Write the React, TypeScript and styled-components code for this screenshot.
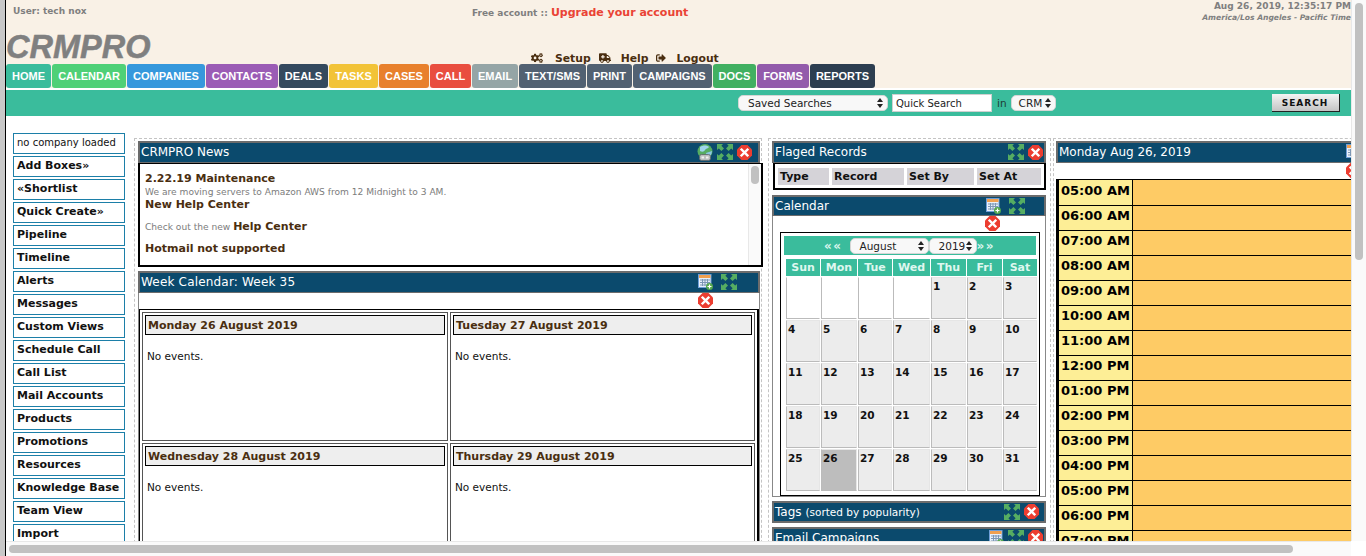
import React from "react";
import styled, { createGlobalStyle } from "styled-components";
import { FaCogs, FaAmbulance, FaSignOutAlt } from "react-icons/fa";

const GlobalStyle = createGlobalStyle`
  html, body { margin: 0; padding: 0; height: 100%; overflow: hidden; background: #fff; }
  * { box-sizing: border-box; }
  body { font-family: "DejaVu Sans", Verdana, sans-serif; }
`;

const tabs = [
  { text: "HOME", color: "#3abc9c", w: 45 },
  { text: "CALENDAR", color: "#4fd077", w: 74 },
  { text: "COMPANIES", color: "#3698dc", w: 78 },
  { text: "CONTACTS", color: "#9b5cb5", w: 72 },
  { text: "DEALS", color: "#34495e", w: 49 },
  { text: "TASKS", color: "#f2c337", w: 49 },
  { text: "CASES", color: "#e8802c", w: 50 },
  { text: "CALL", color: "#e94e3f", w: 41 },
  { text: "EMAIL", color: "#95a5a6", w: 46 },
  { text: "TEXT/SMS", color: "#526172", w: 67 },
  { text: "PRINT", color: "#526172", w: 45 },
  { text: "CAMPAIGNS", color: "#526172", w: 79 },
  { text: "DOCS", color: "#41b061", w: 43 },
  { text: "FORMS", color: "#935bab", w: 52 },
  { text: "REPORTS", color: "#2d3e50", w: 65 },
];

const sideItems = [
  "Add Boxes»", "«Shortlist", "Quick Create»", "Pipeline", "Timeline", "Alerts", "Messages",
  "Custom Views", "Schedule Call", "Call List", "Mail Accounts", "Products", "Promotions",
  "Resources", "Knowledge Base", "Team View", "Import",
];

const hours = [
  "05:00 AM", "06:00 AM", "07:00 AM", "08:00 AM", "09:00 AM", "10:00 AM", "11:00 AM", "12:00 PM",
  "01:00 PM", "02:00 PM", "03:00 PM", "04:00 PM", "05:00 PM", "06:00 PM", "07:00 PM",
];

const weekDays = ["Sun", "Mon", "Tue", "Wed", "Thu", "Fri", "Sat"];
const monthCells = [0, 0, 0, 0, ...Array.from({ length: 31 }, (_, i) => i + 1)];

const ExpandIcon = () => (
  <svg width="16" height="16" viewBox="0 0 16 16">
    <g fill="#56ad62">
      <polygon points="0,0 6,0 4.4,1.8 7,4.4 4.4,7 1.8,4.4 0,6" />
      <polygon points="16,0 10,0 11.6,1.8 9,4.4 11.6,7 14.2,4.4 16,6" />
      <polygon points="0,16 6,16 4.4,14.2 7,11.6 4.4,9 1.8,11.6 0,10" />
      <polygon points="16,16 10,16 11.6,14.2 9,11.6 11.6,9 14.2,11.6 16,10" />
    </g>
  </svg>
);

const CloseIcon = () => (
  <svg width="15" height="15" viewBox="0 0 15 15">
    <polygon points="4.5,0 10.5,0 15,4.5 15,10.5 10.5,15 4.5,15 0,10.5 0,4.5" fill="#ec3d30" />
    <path d="M4.6 4.6 L10.4 10.4 M10.4 4.6 L4.6 10.4" stroke="#fff" strokeWidth="2.4" strokeLinecap="square" />
  </svg>
);

const CalendarAddIcon = () => (
  <svg width="15" height="16" viewBox="0 0 15 16">
    <rect x="0.5" y="0.5" width="12.5" height="13" fill="#e8f0fa" stroke="#6f9fd8" />
    <rect x="1" y="1" width="11.5" height="3" fill="#f0a050" />
    <path d="M2 6h10M2 8.5h10M2 11h10M4.5 5v7M7 5v7M9.5 5v7" stroke="#7d97b5" strokeWidth="1" />
    <circle cx="11.5" cy="12.5" r="3.5" fill="#54a84e" />
    <path d="M9.5 12.5h4M11.5 10.5v4" stroke="#fff" strokeWidth="1.2" />
  </svg>
);

const GlobeIcon = () => (
  <svg width="16" height="17" viewBox="0 0 16 17">
    <circle cx="8" cy="7.5" r="7.5" fill="#56ad62" />
    <path d="M3 3c3-2 7-2 9 0-1 2-3 1-4 3s-3 2-5 1z" fill="#9fd4ec" />
    <path d="M9 9c2-1 4-1 6-2 0 3-2 6-5 7z" fill="#8cc6e4" />
    <rect x="2.5" y="10.5" width="11" height="6" rx="2" fill="#b9bdbd" stroke="#5d6668" strokeWidth="0.8" />
    <rect x="4.5" y="12.5" width="2.6" height="2" fill="#f2f2f2" />
    <rect x="8.9" y="12.5" width="2.6" height="2" fill="#f2f2f2" />
  </svg>
);

const SelectArrows = () => (
  <svg width="6" height="10" viewBox="0 0 6 10">
    <path d="M3 0 L6 4 H0 Z M3 10 L0 6 H6 Z" fill="#222" />
  </svg>
);

export default function App() {
  return (
    <Screen>
      <GlobalStyle />
      <LeftEdge />
      <Stage>
        <Upper>
          <Page>
            <Header>
              <TopRow>
                <UserLabel>User: tech nox</UserLabel>
                <Account>
                  Free account :: <Upgrade>Upgrade your account</Upgrade>
                </Account>
                <Clock>
                  <div>Aug 26, 2019, 12:35:17 PM</div>
                  <Zone>America/Los Angeles - Pacific Time</Zone>
                </Clock>
              </TopRow>
              <LogoRow>
                <Logo>CRMPRO</Logo>
                <TopLinks>
                  <FaCogs size={12} />
                  <TopLink $gap={12}>Setup</TopLink>
                  <FaAmbulance size={12} />
                  <TopLink $gap={10}>Help</TopLink>
                  <FaSignOutAlt size={10} />
                  <TopLink $gap={10}>Logout</TopLink>
                </TopLinks>
              </LogoRow>
              <Nav>
                {tabs.map((tab) => (
                  <Tab key={tab.text} $color={tab.color} $w={tab.w}>
                    {tab.text}
                  </Tab>
                ))}
              </Nav>
            </Header>
            <SearchBar>
              <SelectBox $w={150}>
                Saved Searches
                <SelectArrows />
              </SelectBox>
              <SearchInput>Quick Search</SearchInput>
              <InLabel>in</InLabel>
              <SelectBox $w={45} $pad={7}>
                CRM
                <SelectArrows />
              </SelectBox>
              <SearchButton>SEARCH</SearchButton>
            </SearchBar>
            <Main>
              <Sidebar>
                <CompanyBox>no company loaded</CompanyBox>
                {sideItems.map((item) => (
                  <SideItem key={item}>{item}</SideItem>
                ))}
              </Sidebar>

              <Column $w={628}>
                <PanelHeader $w={622}>
                  <PanelTitle>CRMPRO News</PanelTitle>
                  <PanelIcons $right={6}>
                    <GlobeIcon />
                    <ExpandIcon />
                    <CloseIcon />
                  </PanelIcons>
                </PanelHeader>
                <NewsBody>
                  <NewsText>
                    <NewsTitle>2.22.19 Maintenance</NewsTitle>
                    <NewsNote>We are moving servers to Amazon AWS from 12 Midnight to 3 AM.</NewsNote>
                    <NewsTitle>New Help Center</NewsTitle>
                    <NewsLine>
                      Check out the new <NewsTitle as="span">Help Center</NewsTitle>
                    </NewsLine>
                    <NewsTitle>Hotmail not supported</NewsTitle>
                    <NewsClip>Hotmail and Live users will not be receiving emails from the CRM.</NewsClip>
                  </NewsText>
                  <InnerTrack>
                    <InnerThumb />
                  </InnerTrack>
                </NewsBody>

                <WeekHeader>
                  <WeekTitle>Week Calendar: Week 35</WeekTitle>
                  <PanelIcons $right={21} $gap={8}>
                    <CalendarAddIcon />
                    <ExpandIcon />
                  </PanelIcons>
                </WeekHeader>
                <WeekBody>
                  <CloseRow $left={559}>
                    <CloseIcon />
                  </CloseRow>
                  <WeekGrid>
                    {["Monday 26 August 2019", "Tuesday 27 August 2019", "Wednesday 28 August 2019", "Thursday 29 August 2019"].map(
                      (day) => (
                        <DayCell key={day}>
                          <DayTitle>{day}</DayTitle>
                          <NoEvents>No events.</NoEvents>
                        </DayCell>
                      ),
                    )}
                  </WeekGrid>
                </WeekBody>
              </Column>

              <Column $w={283}>
                <SideHeader>
                  <PanelTitle>Flaged Records</PanelTitle>
                  <PanelIcons $right={1}>
                    <ExpandIcon />
                    <CloseIcon />
                  </PanelIcons>
                </SideHeader>
                <FlagBody>
                  <FlagCell $w={51}>Type</FlagCell>
                  <FlagCell $w={72}>Record</FlagCell>
                  <FlagCell $w={67}>Set By</FlagCell>
                  <FlagCell $w={64}>Set At</FlagCell>
                </FlagBody>

                <CalendarHeader>
                  <PanelTitle>Calendar</PanelTitle>
                  <PanelIcons $right={19} $gap={8}>
                    <CalendarAddIcon />
                    <ExpandIcon />
                  </PanelIcons>
                </CalendarHeader>
                <CalendarBody>
                  <CloseRow $left={212}>
                    <CloseIcon />
                  </CloseRow>
                  <CalendarFrame>
                    <MonthBar>
                      <Chevrons $after={7}>««</Chevrons>
                      <SelectBox $w={79}>
                        August
                        <SelectArrows />
                      </SelectBox>
                      <SelectBox $w={48}>
                        2019
                        <SelectArrows />
                      </SelectBox>
                      <Chevrons $after={0}>»»</Chevrons>
                    </MonthBar>
                    <MonthGrid>
                      {weekDays.map((d) => (
                        <WeekDay key={d}>{d}</WeekDay>
                      ))}
                      {monthCells.map((n, i) => (
                        <DateCell key={i} $empty={n === 0} $today={n === 26}>
                          {n > 0 ? n : ""}
                        </DateCell>
                      ))}
                    </MonthGrid>
                  </CalendarFrame>
                </CalendarBody>

                <TagsHeader>
                  <PanelTitle>
                    Tags <TitleNote>(sorted by popularity)</TitleNote>
                  </PanelTitle>
                  <PanelIcons $right={5}>
                    <ExpandIcon />
                    <CloseIcon />
                  </PanelIcons>
                </TagsHeader>
                <TagsHeader>
                  <PanelTitle>Email Campaigns</PanelTitle>
                  <PanelIcons $right={1}>
                    <CalendarAddIcon />
                    <ExpandIcon />
                    <CloseIcon />
                  </PanelIcons>
                </TagsHeader>
              </Column>

              <DayColumn>
                <DayHeader>
                  <PanelTitle>Monday Aug 26, 2019</PanelTitle>
                  <PanelIcons $right={21}>
                    <CalendarAddIcon />
                  </PanelIcons>
                </DayHeader>
                <CloseRow $left={290}>
                  <CloseIcon />
                </CloseRow>
                <HourTable>
                  {hours.map((h) => (
                    <HourRow key={h}>
                      <HourLabel>{h}</HourLabel>
                      <HourSlot />
                    </HourRow>
                  ))}
                </HourTable>
              </DayColumn>
            </Main>
          </Page>
          <VTrack>
            <VThumb />
          </VTrack>
        </Upper>
        <BottomRow>
          <HTrack>
            <HThumb />
          </HTrack>
          <Corner />
        </BottomRow>
      </Stage>
    </Screen>
  );
}

const Screen = styled.div`
  display: flex;
  width: 1366px;
  height: 556px;
  overflow: hidden;
  background: #fff;
`;
const LeftEdge = styled.div`
  flex: none;
  width: 6px;
  background: #c8c8c8;
  border-right: 1px solid #000;
`;
const Stage = styled.div`
  flex: 1;
  min-width: 0;
  display: flex;
  flex-direction: column;
`;
const Upper = styled.div`
  flex: 1;
  min-height: 0;
  display: flex;
`;
const Page = styled.div`
  flex: 1;
  min-width: 0;
  overflow: hidden;
`;
const VTrack = styled.div`
  flex: none;
  width: 15px;
  background: #fafafa;
  border-left: 1px solid #e8e8e8;
  padding: 3px 3px 0 3px;
`;
const VThumb = styled.div`
  width: 8px;
  height: 257px;
  border-radius: 4px;
  background: #c1c1c1;
`;
const BottomRow = styled.div`
  flex: none;
  height: 15px;
  display: flex;
`;
const HTrack = styled.div`
  flex: 1;
  background: #fafafa;
  border-top: 1px solid #e8e8e8;
  padding: 3px 0 0 3px;
`;
const HThumb = styled.div`
  width: 1284px;
  height: 8px;
  border-radius: 4px;
  background: #c1c1c1;
`;
const Corner = styled.div`
  flex: none;
  width: 15px;
  background: #fff;
`;

const Header = styled.div`
  height: 88px;
  background: #f9f1e6;
`;
const TopRow = styled.div`
  display: grid;
  grid-template-columns: 466px 1fr auto;
  height: 31px;
`;
const UserLabel = styled.div`
  padding: 6px 0 0 7px;
  font-size: 9px;
  font-weight: 700;
  color: #7f7f7f;
`;
const Account = styled.div`
  padding-top: 6px;
  font-size: 9px;
  font-weight: 700;
  color: #7f7f7f;
`;
const Upgrade = styled.span`
  font-size: 11px;
  color: #ea4335;
`;
const Clock = styled.div`
  padding-top: 1px;
  text-align: right;
  font-size: 9px;
  line-height: 11px;
  font-weight: 700;
  color: #7f7f7f;
`;
const Zone = styled.div`
  font-size: 7.6px;
  font-style: italic;
`;
const LogoRow = styled.div`
  display: flex;
  height: 33px;
`;
const Logo = styled.div`
  width: 525px;
  font-family: "Liberation Sans", Arial, sans-serif;
  font-size: 32.5px;
  line-height: 33px;
  font-weight: 700;
  font-style: italic;
  color: #808080;
  -webkit-text-stroke: 0.5px #808080;
`;
const TopLinks = styled.div`
  display: flex;
  align-items: center;
  height: 14px;
  margin-top: 20px;
  color: #4a2e10;
`;
const TopLink = styled.span<{ $gap: number }>`
  margin: 0 8px 0 ${({ $gap }) => $gap}px;
  font-size: 10.8px;
  font-weight: 700;
`;
const Nav = styled.div`
  display: flex;
  gap: 1px;
  height: 24px;
`;
const Tab = styled.div<{ $color: string; $w: number }>`
  width: ${({ $w }) => $w}px;
  display: flex;
  align-items: center;
  justify-content: center;
  border-radius: 3px;
  background: ${({ $color }) => $color};
  font-family: "Liberation Sans", Arial, sans-serif;
  font-size: 11px;
  font-weight: 700;
  color: #fff;
`;

const SearchBar = styled.div`
  display: flex;
  align-items: center;
  height: 26px;
  margin-top: 2px;
  padding-left: 732px;
  background: #3abc9c;
`;
const SelectBox = styled.div<{ $w: number; $pad?: number }>`
  flex: none;
  width: ${({ $w }) => $w}px;
  height: 16px;
  display: flex;
  align-items: center;
  justify-content: space-between;
  padding: 0 4px 0 ${({ $pad }) => $pad ?? 9}px;
  border: 1px solid #d6d6d6;
  border-radius: 5px;
  background: #f8f8f8;
  font-size: 10.5px;
  color: #222;
`;
const SearchInput = styled.div`
  width: 100px;
  height: 18px;
  margin-left: 4px;
  padding: 3px 0 0 3px;
  background: #fff;
  border: 1px solid #d0d0d0;
  font-size: 10px;
  color: #222;
`;
const InLabel = styled.span`
  margin: 0 4px 0 5px;
  font-size: 10.5px;
  color: #1d3d36;
`;
const SearchButton = styled.div`
  width: 68px;
  height: 18px;
  margin-left: 216px;
  display: flex;
  align-items: center;
  justify-content: center;
  background: linear-gradient(#f4f4f4, #c4c4c4);
  border-right: 1px solid #222;
  border-bottom: 1px solid #222;
  font-size: 9px;
  font-weight: 700;
  letter-spacing: 1px;
  color: #111;
`;

const Main = styled.div`
  display: flex;
  align-items: flex-start;
  padding: 17px 0 0 7px;
`;
const Sidebar = styled.div`
  flex: none;
  width: 112px;
  display: flex;
  flex-direction: column;
  gap: 2px;
`;
const CompanyBox = styled.div`
  height: 21px;
  padding-left: 3px;
  border: 1px solid #1c7fa8;
  font-size: 10px;
  line-height: 17px;
  color: #111;
`;
const SideItem = styled.div`
  height: 21px;
  padding-left: 3px;
  border: 1px solid #1c7fa8;
  font-size: 11px;
  line-height: 18px;
  font-weight: 700;
  color: #111;
`;

const Column = styled.div<{ $w: number }>`
  flex: none;
  width: ${({ $w }) => $w}px;
  height: 420px;
  margin: 5px 0 0 9px;
  padding: 2px 0 0 3px;
  border: 1px dashed #c4c4c4;
  border-bottom: 0;

  & + & {
    margin-left: 6px;
  }
`;
const DayColumn = styled.div`
  flex: none;
  width: 330px;
  height: 420px;
  margin: 5px 0 0 2px;
  padding: 2px 0 0 2px;
  border: 1px dashed #c4c4c4;
  border-bottom: 0;
`;
const PanelHeader = styled.div<{ $w?: number }>`
  width: ${({ $w }) => ($w ? `${$w}px` : "auto")};
  height: 22px;
  display: flex;
  align-items: center;
  padding: 0 0 1px 1px;
  border: 2px solid #6c6c6c;
  border-bottom-width: 1px;
  background: #0b4a6d;
`;
const PanelTitle = styled.div`
  font-size: 12px;
  white-space: nowrap;
  color: #fff;
`;
const WeekTitle = styled(PanelTitle)`
  letter-spacing: 0.18px;
`;
const TitleNote = styled.span`
  font-size: 10.5px;
`;
const PanelIcons = styled.div<{ $right: number; $gap?: number }>`
  display: flex;
  align-items: center;
  gap: ${({ $gap }) => $gap ?? 4}px;
  margin: 0 ${({ $right }) => $right}px 0 auto;
`;
const NewsBody = styled.div`
  width: 625px;
  height: 104px;
  display: flex;
  overflow: hidden;
  border: 2px solid #000;
  border-top-width: 1px;
  background: #fff;
`;
const NewsText = styled.div`
  flex: 1;
  min-width: 0;
  padding: 8px 0 0 5px;
`;
const NewsTitle = styled.div`
  font-size: 11px;
  font-weight: 700;
  line-height: 14px;
  color: #4a2e10;
`;
const NewsNote = styled.div`
  font-size: 9.1px;
  line-height: 12px;
  color: #7c7c7c;
`;
const NewsLine = styled.div`
  margin: 8px 0;
  font-size: 9.1px;
  line-height: 14px;
  color: #7c7c7c;
`;
const NewsClip = styled(NewsLine)`
  margin-top: 6px;
`;
const InnerTrack = styled.div`
  flex: none;
  width: 13px;
  padding: 2px 2px 0;
  background: #fafafa;
  border-left: 1px solid #e8e8e8;
`;
const InnerThumb = styled.div`
  width: 8px;
  height: 18px;
  border-radius: 4px;
  background: #c1c1c1;
`;
const WeekHeader = styled(PanelHeader)`
  width: 622px;
  margin-top: 4px;
`;
const WeekBody = styled.div`
  width: 622px;
  border: 1px solid #888;
  border-top: 0;
  background: #fff;
`;
const CloseRow = styled.div<{ $left: number }>`
  height: 16px;
  padding: 0 0 0 ${({ $left }) => $left}px;
  line-height: 0;
`;
const WeekGrid = styled.div`
  display: grid;
  width: 620px;
  grid-template-columns: 306px 305px;
  grid-auto-rows: 129px;
  gap: 2px;
  padding: 2px 0 0 2px;
  border: solid #000;
  border-width: 1px 2px 0 1px;
`;
const DayCell = styled.div`
  padding: 2px;
  border: 1px solid #555;
  background: #fff;
`;
const DayTitle = styled.div`
  height: 20px;
  padding-left: 2px;
  border: 1px solid #000;
  background: #eee;
  font-size: 11px;
  line-height: 20px;
  font-weight: 700;
  color: #4a2e10;
`;
const NoEvents = styled.div`
  margin: 15px 0 0 2px;
  font-size: 10.5px;
  color: #111;
`;

const SideHeader = styled(PanelHeader)`
  width: 274px;
`;
const FlagBody = styled.div`
  width: 273px;
  height: 27px;
  margin-left: 1px;
  display: flex;
  gap: 3px;
  padding: 4px 0 0 3px;
  border: 2px solid #000;
  border-top-width: 1px;
  background: #fff;
`;
const FlagCell = styled.div<{ $w: number }>`
  width: ${({ $w }) => $w}px;
  height: 17px;
  padding-left: 2px;
  background: #d5d3d8;
  font-size: 11px;
  line-height: 18px;
  font-weight: 700;
  color: #111;
`;
const CalendarHeader = styled(PanelHeader)`
  width: 274px;
  height: 21px;
  margin-top: 5px;
`;
const CalendarBody = styled.div`
  width: 274px;
  height: 281px;
  border: 1px solid #888;
  border-top: 0;
  background: #fff;
`;
const CalendarFrame = styled.div`
  width: 260px;
  height: 264px;
  margin-left: 7px;
  padding: 3px;
  border: 1px solid #000;
`;
const MonthBar = styled.div`
  height: 19px;
  display: flex;
  align-items: center;
  padding-left: 40px;
  background: #3abc9c;
`;
const Chevrons = styled.span<{ $after: number }>`
  margin-right: ${({ $after }) => $after}px;
  font-size: 12px;
  font-weight: 700;
  letter-spacing: 1.5px;
  color: #d8f5ec;
`;
const MonthGrid = styled.div`
  display: grid;
  grid-template-columns: 34px 36px 34px 37px 35px 35px 34px;
  grid-template-rows: 17px repeat(5, 42px);
  gap: 1px;
  padding: 4px 0 0 2px;
`;
const WeekDay = styled.div`
  display: flex;
  align-items: center;
  justify-content: center;
  background: #3abc9c;
  font-size: 11px;
  font-weight: 700;
  color: #dff7ef;
`;
const DateCell = styled.div<{ $empty: boolean; $today: boolean }>`
  padding: 2px 0 0 1px;
  border: 1px solid ${({ $empty }) => ($empty ? "#fff" : "#e6e6e6")};
  border-left-color: #bbb;
  border-bottom-color: #bbb;
  background: ${({ $empty, $today }) => ($today ? "#bdbdbd" : $empty ? "#fff" : "#ececec")};
  font-size: 10.5px;
  font-weight: 700;
  color: #111;
`;
const TagsHeader = styled(PanelHeader)`
  width: 274px;
  margin-top: 4px;
  border-bottom-width: 2px;
`;

const DayHeader = styled(PanelHeader)`
  width: 328px;
`;
const HourTable = styled.div`
  width: 330px;
  border-top: 1px solid #000;
  border-left: 2px solid #000;
`;
const HourRow = styled.div`
  height: 25px;
  display: flex;
  border-bottom: 1px solid #000;

  &:first-child {
    height: 26px;
  }
`;
const HourLabel = styled.div`
  flex: none;
  width: 75px;
  padding-left: 2px;
  border-left: 1px solid #000;
  border-right: 1px solid #000;
  background: #fdee96;
  font-size: 13px;
  line-height: 20px;
  font-weight: 700;
  color: #000;

  ${HourRow}:first-child & {
    line-height: 22px;
  }
`;
const HourSlot = styled.div`
  flex: 1;
  background: #fecb65;
`;
